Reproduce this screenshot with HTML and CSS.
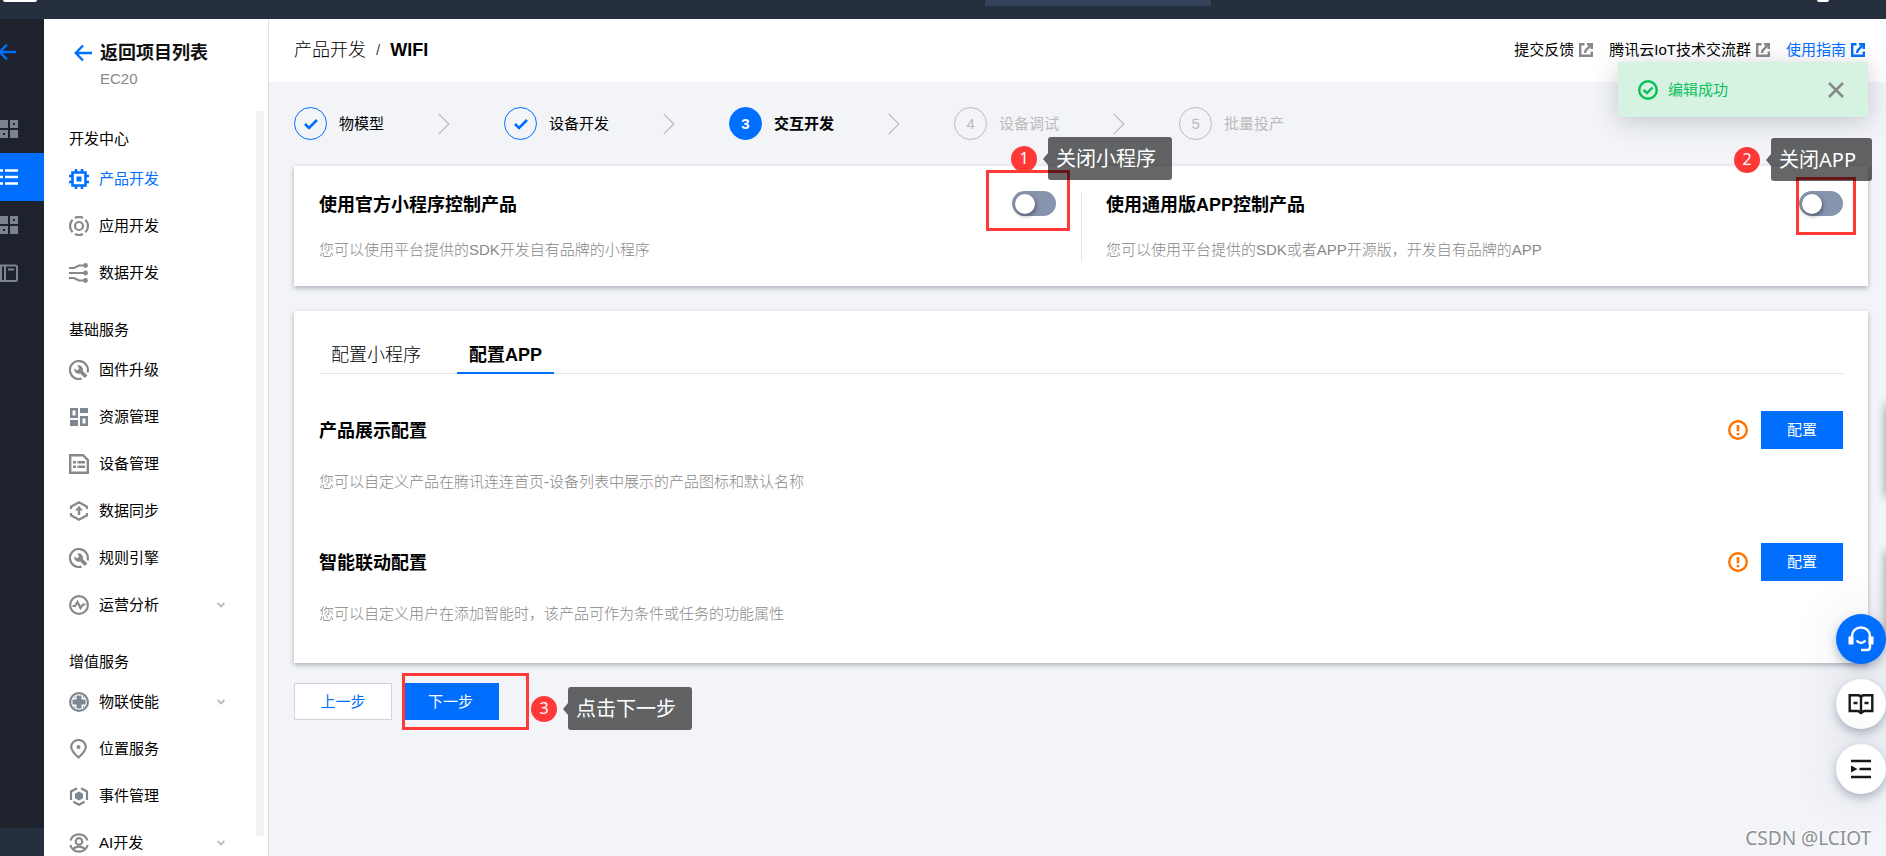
FILE: index.html
```
<!DOCTYPE html>
<html lang="zh-CN">
<head>
<meta charset="utf-8">
<meta name="viewport" content="width=device-width, initial-scale=1">
<title>产品开发 / WIFI</title>
<link rel="stylesheet" href="styles.css">
</head>
<body>
<svg class="defs" aria-hidden="true">
  <symbol id="back" viewBox="0 0 18 18"><path d="M9 1.500L1.800 9L9 16.500M2 9H18" fill="none" stroke="currentColor" stroke-width="2.400"/></symbol>
  <symbol id="grid" viewBox="0 0 18 18"><path d="M0 0h8v8H0zM10 10h8v8h-8zM10 0h8v8h-8zM13 3v2h2V3zM0 10h8v8H0zM3 13v2h2v-2z" fill="currentColor" fill-rule="evenodd"/></symbol>
  <symbol id="wrench" viewBox="0 0 20 20"><path d="M18.500 12.500A9 9 0 1 0 12.500 18.600" fill="none" stroke="currentColor" stroke-width="2.200"/><path d="M5.300 8.200L8 10.500L10.200 8.500L8.200 5.500A4.500 4.500 0 0 1 13.800 11L18.500 15.500L15.800 18L11.200 13.500A4.500 4.500 0 0 1 5.300 8.200z" fill="currentColor"/></symbol>
  <symbol id="external" viewBox="0 0 14 14"><path d="M5.500 1.200H1.200V12.800H12.800V8.500M8 1.200H12.800V6" fill="none" stroke="currentColor" stroke-width="2.400"/><path d="M12.500 1.500L8 6Q6 7.500 6 10" fill="none" stroke="currentColor" stroke-width="2.400"/></symbol>
  <symbol id="warn" viewBox="0 0 20 20"><circle cx="10" cy="10" r="8.800" fill="none" stroke="currentColor" stroke-width="2.400"/><path d="M10 5v6.300M10 13v2.200" stroke="currentColor" stroke-width="2.600"/></symbol>
  <symbol id="tick" viewBox="0 0 14 12"><path d="M1 6L5 10L13 2" fill="none" stroke="currentColor" stroke-width="2.600"/></symbol>
  <symbol id="chev" viewBox="0 0 8 6"><path d="M.5 1L4 4.500L7.500 1" fill="none" stroke="currentColor" stroke-width="1.800"/></symbol>
  <symbol id="next" viewBox="0 0 12 22"><path d="M.7 .8L10.800 11L.7 21.200" fill="none" stroke="currentColor" stroke-width="1.200"/></symbol>
</svg>

<header class="topbar">
  <span class="topbar-logo"></span>
  <span class="topbar-search"></span>
  <span class="topbar-avatar"></span>
</header>

<div class="shell">
  <nav class="rail" aria-label="主导航">
    <a class="rail-back" href="#" aria-label="返回"><svg width="18" height="18"><use href="#back"/></svg></a>
    <a class="rail-item" href="#" aria-label="概览"><svg width="18" height="18"><use href="#grid"/></svg></a>
    <a class="rail-item rail-active" href="#" aria-label="项目"><svg width="18" height="18" viewBox="0 0 18 18"><path d="M0 2.500h3M5 2.500h13M0 9h3M5 9h13M0 15.500h3M5 15.500h13" stroke="currentColor" stroke-width="2.400"/></svg></a>
    <a class="rail-item" href="#" aria-label="资源"><svg width="18" height="18"><use href="#grid"/></svg></a>
    <a class="rail-item" href="#" aria-label="文档"><svg width="18" height="18" viewBox="0 0 18 18"><path d="M-2 1.500H15.500Q17 1.500 17 3V15.500Q17 17 15.500 17H-2M1 1V17M5 1V17M8 5.500H14" fill="none" stroke="currentColor" stroke-width="2"/></svg></a>
    <span class="rail-foot"></span>
  </nav>

  <aside class="sidebar">
    <div class="side-head">
      <a class="side-back" href="#"><svg width="18" height="18"><use href="#back"/></svg>返回项目列表</a>
      <p class="side-project">EC20</p>
    </div>
    <div class="side-body">
      <div class="side-list">
        <section class="side-group">
          <h2>开发中心</h2>
          <a class="side-item side-current" href="#"><svg width="20" height="20" viewBox="0 0 20 20"><path d="M3.500 3.500h13v13h-13zM7 0v3M13 0v3M7 17v3M13 17v3M0 7h3M0 13h3M17 7h3M17 13h3" fill="none" stroke="currentColor" stroke-width="2.600"/><path d="M7.500 7.500h5v5h-5z" fill="currentColor"/></svg>产品开发</a>
          <a class="side-item" href="#"><svg width="20" height="20" viewBox="0 0 20 20" fill="none" stroke="currentColor" stroke-width="2.200"><circle cx="10" cy="10" r="4"/><path d="M6 1.900A9 9 0 0 1 14 1.900M6 18.100A9 9 0 0 0 14 18.100M3.600 3.700A9 9 0 0 0 3.600 16.300M16.400 3.700A9 9 0 0 1 16.400 16.300"/></svg>应用开发</a>
          <a class="side-item" href="#"><svg width="20" height="20" viewBox="0 0 20 20"><path d="M0 5H5L10 2.500H16M0 10H16M0 15H5L10 17.500H16" fill="none" stroke="currentColor" stroke-width="2.200"/><g fill="currentColor"><circle cx="16.500" cy="2.500" r="2.400"/><circle cx="16.500" cy="10" r="2.400"/><circle cx="16.500" cy="17.500" r="2.400"/></g></svg>数据开发</a>
        </section>
        <section class="side-group">
          <h2>基础服务</h2>
          <a class="side-item" href="#"><svg width="20" height="20"><use href="#wrench"/></svg>固件升级</a>
          <a class="side-item" href="#"><svg class="cool" width="20" height="20" viewBox="0 0 20 20"><path d="M1 1h8v10H1zM3.500 3.500v5h3v-5zM11 1h8v5h-8zM1 13h8v6H1zM11 9h8v10h-8zM13.500 11.500v5h3v-5z" fill="currentColor" fill-rule="evenodd"/></svg>资源管理</a>
          <a class="side-item" href="#"><svg width="20" height="20" viewBox="0 0 20 20"><path d="M1.200 1.200H14L18.800 6V18.800H1.200z" fill="none" stroke="currentColor" stroke-width="2.400"/><path d="M4 8.300h3M8.500 8.300H16M4 12.800h3M8.500 12.800H16" stroke="currentColor" stroke-width="2.400"/></svg>设备管理</a>
          <a class="side-item" href="#"><svg width="20" height="20" viewBox="0 0 20 20"><path d="M2 8V5.700L10 1.300L18 5.700V8M2 12V14.300L10 18.700L18 14.300V12" fill="none" stroke="currentColor" stroke-width="2.200"/><path d="M10 4.800L14 9.500H11.200V14H8.800V9.500H6z" fill="currentColor"/></svg>数据同步</a>
          <a class="side-item" href="#"><svg width="20" height="20"><use href="#wrench"/></svg>规则引擎</a>
          <a class="side-item" href="#"><svg width="20" height="20" viewBox="0 0 20 20" fill="none" stroke="currentColor" stroke-width="2.200"><circle cx="10" cy="10" r="8.900"/><path d="M3.500 11H6L8.500 7L11.500 13L14 9.500H16.500"/></svg>运营分析<svg class="side-more" width="8" height="6"><use href="#chev"/></svg></a>
        </section>
        <section class="side-group">
          <h2>增值服务</h2>
          <a class="side-item" href="#"><svg class="cool" width="20" height="20" viewBox="0 0 20 20"><circle cx="10" cy="10" r="8.900" fill="none" stroke="currentColor" stroke-width="2.200"/><path d="M7.500 3.500h5v4h4v5h-4v4h-5v-4h-4v-5h4z" fill="currentColor"/><path d="M5.300 5.300h1M14 5.300h1M5.300 14.700h1M14 14.700h1" stroke="currentColor" stroke-width="1.500"/></svg>物联使能<svg class="side-more" width="8" height="6"><use href="#chev"/></svg></a>
          <a class="side-item" href="#"><svg width="20" height="20" viewBox="0 0 20 20"><path d="M9.500 18.500Q2.200 12 2.200 8A7.300 7 0 0 1 16.800 8Q16.800 12 9.500 18.500z" fill="none" stroke="currentColor" stroke-width="2.200"/><circle cx="9.500" cy="8" r="2" fill="currentColor"/></svg>位置服务</a>
          <a class="side-item" href="#"><svg class="cool" width="20" height="20" viewBox="0 0 20 20"><path d="M8 2.300L2 5.500V14M12 2.300L18 5.500V14M4.500 15.800L10 18.700L15.500 15.800" fill="none" stroke="currentColor" stroke-width="2.200"/><path d="M10 5.500L14 7.800V12.300L10 14.500L6 12.300V7.800z" fill="currentColor"/></svg>事件管理</a>
          <a class="side-item" href="#"><svg width="20" height="20" viewBox="0 0 20 20" fill="none" stroke="currentColor" stroke-width="2.200"><circle cx="10" cy="8.500" r="3.300"/><path d="M1.500 7.500A9 9 0 0 1 18.500 7.500M1.300 12A9 9 0 0 0 18.700 12M4.500 15.500Q10 11.800 15.500 15.500"/></svg>AI开发<svg class="side-more" width="8" height="6"><use href="#chev"/></svg></a>
        </section>
      </div>
      <div class="side-track"></div>
    </div>
  </aside>

  <main class="main">
    <div class="page-head">
      <div class="crumbs"><a href="#">产品开发</a><span class="crumb-sep">/</span><strong>WIFI</strong></div>
      <div class="head-links">
        <a href="#">提交反馈<svg width="14" height="14"><use href="#external"/></svg></a>
        <a href="#">腾讯云IoT技术交流群<svg width="14" height="14"><use href="#external"/></svg></a>
        <a class="head-guide" href="#">使用指南<svg width="14" height="14"><use href="#external"/></svg></a>
      </div>
    </div>

    <div class="content">
      <ol class="steps">
        <li class="step done"><span class="step-dot"><svg width="14" height="12"><use href="#tick"/></svg></span>物模型</li>
        <li class="step-arrow"><svg width="12" height="22"><use href="#next"/></svg></li>
        <li class="step done"><span class="step-dot"><svg width="14" height="12"><use href="#tick"/></svg></span>设备开发</li>
        <li class="step-arrow"><svg width="12" height="22"><use href="#next"/></svg></li>
        <li class="step current"><span class="step-dot">3</span>交互开发</li>
        <li class="step-arrow"><svg width="12" height="22"><use href="#next"/></svg></li>
        <li class="step"><span class="step-dot">4</span>设备调试</li>
        <li class="step-arrow"><svg width="12" height="22"><use href="#next"/></svg></li>
        <li class="step"><span class="step-dot">5</span>批量投产</li>
      </ol>

      <section class="card controls">
        <div class="control">
          <div class="control-row">
            <h3><label for="mini">使用官方小程序控制产品</label></h3>
            <div class="anchor">
              <input class="switch" id="mini" type="checkbox" role="switch">
              <span class="mark mark-mini"></span>
              <span class="note note-mini"><b>1</b><em>关闭小程序</em></span>
            </div>
          </div>
          <p class="desc">您可以使用平台提供的SDK开发自有品牌的小程序</p>
        </div>
        <div class="control">
          <div class="control-row">
            <h3><label for="app">使用通用版APP控制产品</label></h3>
            <div class="anchor">
              <input class="switch" id="app" type="checkbox" role="switch">
              <span class="mark mark-app"></span>
              <span class="note note-app"><b>2</b><em>关闭APP</em></span>
            </div>
          </div>
          <p class="desc">您可以使用平台提供的SDK或者APP开源版，开发自有品牌的APP</p>
        </div>
      </section>

      <section class="card setup">
        <div class="tabs" role="tablist">
          <button class="tab" role="tab" aria-selected="false">配置小程序</button>
          <button class="tab tab-on" role="tab" aria-selected="true">配置APP</button>
        </div>
        <div class="setting">
          <div class="setting-row">
            <h3>产品展示配置</h3>
            <svg class="warn" width="20" height="20"><use href="#warn"/></svg>
            <button class="btn btn-config">配置</button>
          </div>
          <p class="desc">您可以自定义产品在腾讯连连首页-设备列表中展示的产品图标和默认名称</p>
        </div>
        <div class="setting">
          <div class="setting-row">
            <h3>智能联动配置</h3>
            <svg class="warn" width="20" height="20"><use href="#warn"/></svg>
            <button class="btn btn-config">配置</button>
          </div>
          <p class="desc">您可以自定义用户在添加智能时，该产品可作为条件或任务的功能属性</p>
        </div>
      </section>

      <div class="actions">
        <button class="btn btn-plain">上一步</button>
        <div class="anchor">
          <button class="btn btn-next">下一步</button>
          <span class="mark mark-next"></span>
          <span class="note note-next"><b>3</b><em>点击下一步</em></span>
        </div>
      </div>
    </div>
  </main>
</div>

<div class="toast" role="status">
  <svg width="20" height="20" viewBox="0 0 20 20" fill="none" stroke="currentColor" stroke-width="2.400"><circle cx="10" cy="10" r="8.800"/><path d="M5.500 10L9 13L14.500 7.500"/></svg>
  <span>编辑成功</span>
  <button class="toast-close" aria-label="关闭"><svg width="16" height="16" viewBox="0 0 16 16"><path d="M1 1L15 15M15 1L1 15" stroke="currentColor" stroke-width="2.600"/></svg></button>
</div>

<div class="edge"><span></span><span></span></div>

<div class="floaters">
  <button class="floater floater-help" aria-label="客服"><svg width="26" height="26" viewBox="0 0 26 26" fill="none" stroke="currentColor" stroke-width="2.400"><path d="M4 11V10A9 8.500 0 0 1 22 10V21Q22 24 19 24H13M8.500 14.500Q13 19.500 17.500 14.500"/><path d="M.5 10.500H5.500V18.500H.5zM20.500 10.500H25.500V18.500H20.500z" fill="currentColor" stroke="none"/></svg></button>
  <button class="floater" aria-label="文档"><svg width="26" height="22" viewBox="0 0 26 22" fill="none" stroke="currentColor" stroke-width="2.400"><path d="M1.700 2.200H10Q13 2.200 13 5Q13 2.200 16 2.200H24.300V18H16L13 20L10 18H1.700zM13 4V20M5.500 10H9.500M16.500 10H20.500"/></svg></button>
  <button class="floater" aria-label="目录"><svg width="22" height="20" viewBox="0 0 22 20"><path d="M1 2H21M9.500 10H21M1 18H21" stroke="currentColor" stroke-width="2.400"/><path d="M1 6.500L7.500 10L1 13.500z" fill="currentColor"/></svg></button>
</div>

<div class="watermark">CSDN @LCIOT</div>
</body>
</html>
```
FILE: styles.css
```
* { box-sizing: border-box; }
body, h2, h3, p, ol { margin: 0; padding: 0; }
body {
  height: 100vh;
  display: flex;
  flex-direction: column;
  overflow: hidden;
  position: relative;
  background: #f2f4f8;
  color: #000;
  font: 15px/22px "Liberation Sans", "Noto Sans CJK SC", sans-serif;
}
a { color: inherit; text-decoration: none; }
button { font: inherit; border: 0; padding: 0; cursor: pointer; }
svg { display: block; flex: none; }
h3 { padding-top: 2px; font-size: 18px; line-height: 24px; font-weight: 700; }
.defs { position: absolute; width: 0; height: 0; }

.topbar {
  flex: none;
  height: 19px;
  background: #262f3e;
  display: flex;
  align-items: flex-start;
  padding-right: 57px;
}
.topbar-logo { width: 34px; height: 2px; margin-left: 3px; background: #fff; border-radius: 0 0 6px 6px; }
.topbar-search { width: 226px; height: 6px; margin-left: auto; background: #344359; }
.topbar-avatar { width: 12px; height: 2px; margin-left: 606px; background: #fff; border-radius: 0 0 6px 6px; }

.shell { flex: 1; min-height: 0; display: flex; }

.rail {
  width: 44px;
  flex: none;
  background: #1e222d;
  color: #7b858f;
  display: flex;
  flex-direction: column;
}
.rail-back { padding: 24px 0; margin-bottom: 20px; margin-left: -2px; color: #006eff; }
.rail-item { height: 48px; display: flex; align-items: center; }
.rail-active { background: #006eff; color: #fff; }
.rail-foot { height: 28px; margin-top: auto; background: #262f3e; }

.sidebar {
  width: 225px;
  flex: none;
  display: flex;
  flex-direction: column;
  background: #fff;
  border-right: 1px solid #dcdfe8;
}
.side-head { height: 92px; flex: none; padding: 22px 0 0 30px; }
.side-back { display: flex; align-items: center; gap: 8px; font-size: 18px; line-height: 24px; font-weight: 700; color: #111; }
.side-back svg { color: #006eff; }
.side-project { padding: 3px 0 0 26px; color: #888; }
.side-body { flex: 1; min-height: 0; display: flex; }
.side-list { flex: 1; overflow: hidden; padding: 17px 31px 0 25px; }
.side-group { margin-bottom: 23px; }
.side-group h2 { font-size: 15px; line-height: 22px; font-weight: 400; margin-bottom: 5px; }
.side-item { height: 47px; display: flex; align-items: center; gap: 10px; }
.side-item svg { color: #888; }
.side-item .cool { color: #7c8791; }
.side-item .side-more { margin-left: auto; color: #bbb; }
.side-item.side-current, .side-current svg { color: #006eff; }
.side-track { width: 8px; margin: 0 4px 20px 0; background: #f2f2f2; }

.main { flex: 1; min-width: 0; }
.page-head {
  height: 63px;
  padding: 0 21px 2px 25px;
  display: flex;
  align-items: center;
  justify-content: space-between;
  background: #fff;
}
.crumbs { font-size: 18px; line-height: 24px; display: flex; gap: 10px; }
.crumbs a { font-weight: 300; }
.crumb-sep { font-size: 15px; color: #444; }
.head-links { display: flex; gap: 16px; }
.head-links a { display: flex; align-items: center; gap: 5px; }
.head-links svg { color: #888; }
.head-links .head-guide, .head-guide svg { color: #006eff; }

.content { padding: 25px 18px 0 25px; }
.steps { display: flex; align-items: center; list-style: none; color: #bbb; line-height: 20px; }
.step { display: flex; align-items: center; gap: 12px; }
.step-dot {
  width: 33px;
  height: 33px;
  border: 1px solid #bbb;
  border-radius: 50%;
  display: grid;
  place-items: center;
}
.step-arrow { margin: 0 54px; }
.done { color: #000; }
.done .step-dot { border-color: #006eff; color: #006eff; }
.current { color: #000; font-weight: 700; }
.current .step-dot { background: #006eff; border-color: #006eff; color: #fff; }

.card { background: #fff; box-shadow: 0 2px 5px rgba(40, 50, 70, .35); }
.desc { color: #888; font-weight: 300; }
.anchor { position: relative; }

.controls { display: grid; grid-template-columns: 1fr 1fr; margin-top: 26px; padding: 25px 0; }
.control { padding: 0 25px; height: 70px; }
.control + .control { border-left: 1px solid #e3e6ee; padding-left: 24px; }
.control-row { display: flex; justify-content: space-between; height: 25px; margin-bottom: 23px; }
.switch {
  appearance: none;
  display: block;
  width: 44px;
  height: 25px;
  margin: 0;
  padding: 3px;
  border-radius: 13px;
  background: #8794ad;
}
.switch::before {
  content: "";
  display: block;
  width: 20px;
  height: 20px;
  border-radius: 50%;
  background: #fff;
  box-shadow: 1px 2px 4px rgba(0, 0, 0, .4);
}
.switch:checked { background: #006eff; }
.switch:checked::before { margin-left: auto; }

.setup { margin-top: 25px; padding: 23px 25px 38px; }
.tabs { display: flex; gap: 24px; border-bottom: 1px solid #e5e5e5; }
.tab { background: none; padding: 10px 12px 6px; margin-bottom: -1px; font-size: 18px; line-height: 22px; font-weight: 300; border-bottom: 2px solid transparent; }
.tab-on { font-weight: 700; border-color: #006eff; }
.setting { padding-top: 37px; }
.setting + .setting { padding-top: 50px; }
.setting-row { display: flex; align-items: center; height: 38px; margin-bottom: 22px; }
.warn { margin: 0 13px 0 auto; color: #ff7200; }
.btn { height: 37px; background: #006eff; color: #fff; }
.btn-config { width: 82px; height: 38px; }
.btn-plain { width: 98px; background: #fff; color: #006eff; border: 1px solid #cfd5de; }
.btn-next { width: 97px; display: block; }
.actions { display: flex; gap: 10px; margin-top: 20px; }

.mark { position: absolute; border: 3px solid #ff3838; pointer-events: none; }
.mark-mini { left: -26px; top: -21px; width: 84px; height: 61px; }
.mark-app { left: -3px; top: -14px; width: 60px; height: 58px; }
.mark-next { left: 0; top: -10px; width: 127px; height: 57px; }

.note { position: absolute; display: flex; align-items: center; gap: 11px; white-space: nowrap; font-family: "Noto Sans", "Noto Sans CJK SC", sans-serif; color: #fff; }
.note b { width: 26px; height: 26px; border-radius: 50%; background: #ff3838; font-size: 16px; line-height: 24px; font-weight: 400; text-align: center; }
.note em { position: relative; font-style: normal; font-size: 20px; line-height: 43px; padding: 0 16px 0 8px; background: rgba(0, 0, 0, .6); border-radius: 3px; }
.note em::before { content: ""; position: absolute; right: 100%; top: 16px; border: solid transparent; border-width: 6px 5px 6px 0; border-right-color: rgba(0, 0, 0, .6); }
.note-mini { left: -1px; top: -54px; }
.note-app { left: -65px; top: -53px; }
.note-next { left: 129px; top: 4px; }

.toast {
  position: absolute;
  top: 62px;
  right: 18px;
  width: 250px;
  height: 55px;
  padding: 0 24px 0 20px;
  display: flex;
  align-items: center;
  gap: 10px;
  background: #d6f3e2;
  color: #0abf5b;
  box-shadow: 0 4px 24px rgba(54, 58, 80, .25);
}
.toast-close { margin-left: auto; background: none; color: #888; }

.edge { position: absolute; left: 100%; top: 405px; }
.edge span { display: block; width: 40px; height: 92px; margin-bottom: 54px; background: #fff; box-shadow: 0 0 10px rgba(0, 0, 0, .4); }

.floaters { position: absolute; right: 0; bottom: 62px; display: grid; gap: 15px; }
.floater {
  width: 50px;
  height: 50px;
  border-radius: 50%;
  display: grid;
  place-items: center;
  background: #fff;
  color: #16181c;
  box-shadow: 0 4px 10px rgba(55, 75, 110, .35), 0 0 50px rgba(55, 60, 80, .12);
}
.floater-help { background: #006eff; color: #fff; }

.watermark {
  position: absolute;
  right: 15px;
  bottom: 5px;
  font: 19px/26px "Noto Sans", sans-serif;
  color: #8d8f93;
  text-shadow: -1px -1px 0 #fff;
}
```
